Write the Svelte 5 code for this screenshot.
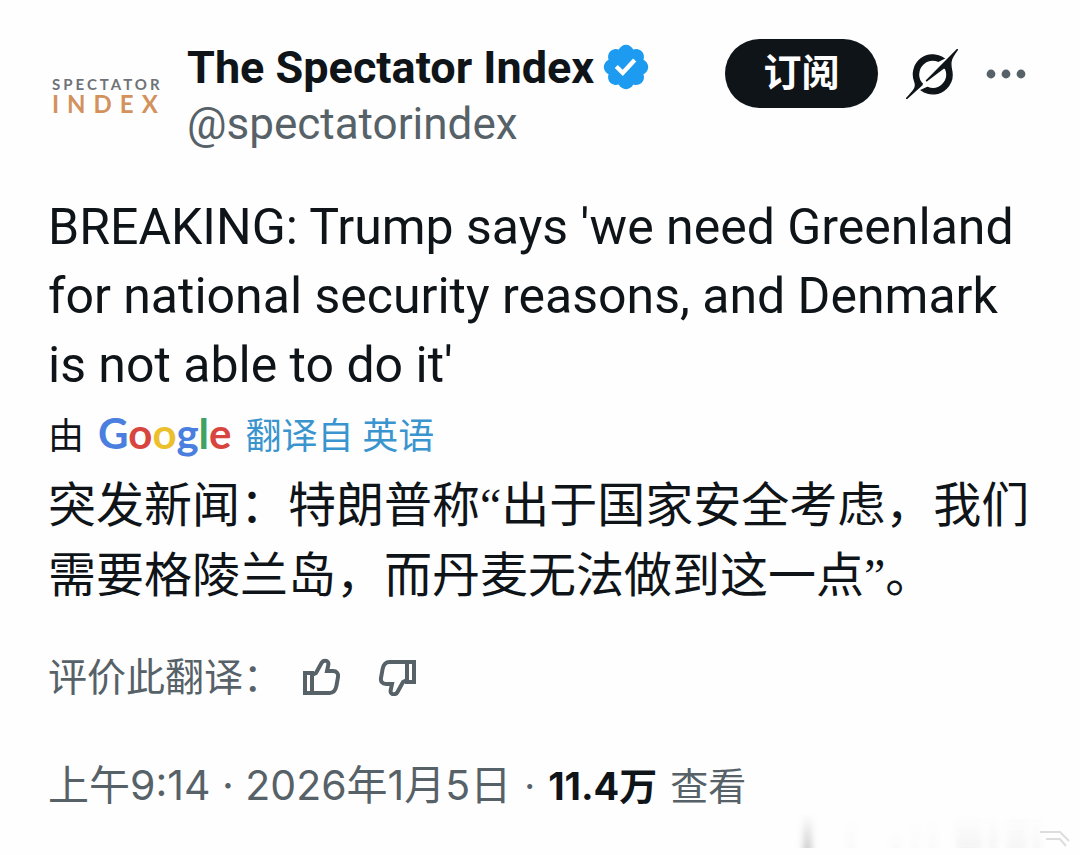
<script lang="ts">
  let rating: 'up' | 'down' | null = null;

  const google = [
    { letter: 'G', color: 'blue' },
    { letter: 'o', color: 'red' },
    { letter: 'o', color: 'yellow' },
    { letter: 'g', color: 'blue' },
    { letter: 'l', color: 'green' },
    { letter: 'e', color: 'red' }
  ];
</script>

<svelte:head>
  <title>The Spectator Index</title>
</svelte:head>

<article class="post">
  <header class="header">
    <a href="#profile" class="avatar">
      <span class="avatar__top">SPECTATOR</span>
      <span class="avatar__bottom">INDEX</span>
    </a>
    <div class="author">
      <div class="author__line">
        <a href="#profile" class="author__name">The Spectator Index</a>
        <svg class="badge" viewBox="0 0 22 22" role="img" aria-label="认证账号">
          <path
            d="M20.396 11c-.018-.646-.215-1.275-.57-1.816-.354-.54-.852-.972-1.438-1.246.223-.607.27-1.264.14-1.897-.131-.634-.437-1.218-.882-1.687-.47-.445-1.053-.75-1.687-.882-.633-.13-1.29-.083-1.897.14-.273-.587-.704-1.086-1.245-1.44S11.647 1.62 11 1.604c-.646.017-1.273.213-1.813.568s-.969.854-1.24 1.44c-.608-.223-1.267-.272-1.902-.14-.635.13-1.22.436-1.69.882-.445.47-.749 1.055-.878 1.688-.13.633-.08 1.29.144 1.896-.587.274-1.087.705-1.443 1.245-.356.54-.555 1.17-.574 1.817.02.647.218 1.276.574 1.817.356.54.856.972 1.443 1.245-.224.606-.274 1.263-.144 1.896.13.634.433 1.218.877 1.688.47.443 1.054.747 1.687.878.633.132 1.29.084 1.897-.136.274.586.705 1.084 1.246 1.439.54.354 1.17.551 1.816.569.647-.016 1.276-.213 1.817-.567s.972-.854 1.245-1.44c.604.239 1.266.296 1.903.164.636-.132 1.22-.447 1.68-.907.46-.46.776-1.044.908-1.681s.075-1.299-.165-1.903c.586-.274 1.084-.705 1.439-1.246.354-.54.551-1.17.569-1.816zM9.662 14.85l-3.429-3.428 1.293-1.302 2.072 2.072 4.4-4.794 1.347 1.246z"
          />
        </svg>
      </div>
      <a href="#profile" class="author__handle">@spectatorindex</a>
    </div>
    <div class="actions">
      <button class="subscribe">订阅</button>
      <button class="icon-button" aria-label="Grok">
        <svg class="grok" viewBox="0 0 33 32">
          <path
            d="M12.745 20.54l10.97-8.19c.539-.4 1.307-.244 1.564.38 1.349 3.288.746 7.241-1.938 9.955-2.683 2.714-6.417 3.31-9.83 1.954l-3.728 1.745c5.347 3.697 11.84 2.782 15.898-1.324 3.219-3.255 4.216-7.692 3.284-11.693l.008.009c-1.351-5.878.332-8.227 3.782-13.031L33 0l-4.54 4.59v-.014L12.743 20.544m-2.263 1.987c-3.837-3.707-3.175-9.446.1-12.755 2.42-2.449 6.388-3.448 9.852-1.979l3.72-1.737c-.67-.49-1.53-1.017-2.515-1.387-4.455-1.854-9.789-.931-13.41 2.728-3.483 3.523-4.579 8.94-2.697 13.561 1.405 3.454-.899 5.898-3.22 8.364C1.49 30.2.666 31.074 0 32l10.478-9.466"
          />
        </svg>
      </button>
      <button class="icon-button" aria-label="更多">
        <svg class="more" viewBox="0 0 40 10">
          <circle cx="5" cy="5" r="4.4" />
          <circle cx="20" cy="5" r="4.4" />
          <circle cx="35" cy="5" r="4.4" />
        </svg>
      </button>
    </div>
  </header>

  <p class="text" lang="en">
    BREAKING: Trump says 'we need Greenland for national security reasons, and Denmark is not able
    to do it'
  </p>

  <div class="source">
    <span>由</span>
    <span class="google">
      {#each google as { letter, color }}<span class={color}>{letter}</span>{/each}
    </span>
    <a href="#translation" class="source__link">翻译自 英语</a>
  </div>

  <p class="text text--translated">
    突发新闻：特朗普称“出于国家安全考虑，我们需要格陵兰岛，而丹麦无法做到这一点”。
  </p>

  <div class="rate">
    <span class="rate__label">评价此翻译：</span>
    <div class="rate__buttons">
      <button
        class="icon-button"
        aria-label="翻译得好"
        aria-pressed={rating === 'up'}
        on:click={() => (rating = 'up')}
      >
        <svg class="thumb" viewBox="0 0 38 38">
          <path d="M3 15h7v20H3z" />
          <path
            d="M10 17l4-2 5.500-10c.9-1.700 2-2.300 3.700-2.300 2.300 0 3.600 1.800 3.100 4.200L25 13h6c3.600 0 5.600 2.600 5 6l-1.600 9c-.9 4.500-3 7-7 7H10z"
          />
        </svg>
      </button>
      <button
        class="icon-button"
        aria-label="翻译得不好"
        aria-pressed={rating === 'down'}
        on:click={() => (rating = 'down')}
      >
        <svg class="thumb" viewBox="0 0 38 38">
          <g transform="rotate(180 19 19)">
            <path d="M2 14h7v20H2z" />
            <path
              d="M9 16l4-2 5.500-10c.9-1.700 2-2.300 3.700-2.300 2.300 0 3.600 1.800 3.100 4.200L24 12h6c3.600 0 5.600 2.600 5 6l-1.600 9c-.9 4.500-3 7-7 7H9z"
            />
          </g>
        </svg>
      </button>
    </div>
  </div>

  <div class="meta">
    <time datetime="2026-01-05T09:14">上午9:14 · 2026年1月5日</time>
    <span>·</span>
    <strong>11.4万</strong>
    <span>查看</span>
  </div>

  <svg class="smudge" viewBox="0 0 280 36" aria-hidden="true">
    <defs>
      <linearGradient id="fade" x1="0" y1="0" x2="0" y2="1">
        <stop offset="0" stop-color="#888" stop-opacity="0" />
        <stop offset="1" stop-color="#888" stop-opacity="1" />
      </linearGradient>
      <filter id="soft" x="-20%" y="-20%" width="140%" height="140%">
        <feGaussianBlur stdDeviation="3 0" />
      </filter>
    </defs>
    <g fill="url(#fade)" filter="url(#soft)">
      <rect x="7" y="0" width="9" height="34" opacity="0.4" />
      <rect x="52" y="6" width="6" height="28" opacity="0.05" />
      <rect x="95" y="18" width="10" height="16" opacity="0.04" />
      <rect x="117" y="6" width="5" height="28" opacity="0.04" />
      <rect x="134" y="6" width="5" height="28" opacity="0.06" />
      <rect x="160" y="2" width="26" height="32" opacity="0.08" />
      <rect x="193" y="2" width="8" height="32" opacity="0.08" />
      <rect x="211" y="2" width="20" height="32" opacity="0.07" />
      <rect x="237" y="2" width="7" height="32" opacity="0.07" />
    </g>
    <path d="M244 18h20l9 9M250 25h14l6 7" />
  </svg>
</article>

<style>
  :global(body) {
    margin: 0;
    background: #fefefe;
  }

  .post {
    padding: 36px 44px 8px 48px;
    font-family: Roboto, 'Noto Sans CJK SC', sans-serif;
    color: #0f1419;
    overflow: hidden;
  }

  a {
    color: inherit;
    text-decoration: none;
  }

  button {
    padding: 0;
    border: 0;
    background: none;
    color: inherit;
    font-family: inherit;
    cursor: pointer;
  }

  svg {
    display: block;
  }

  .header {
    display: flex;
    align-items: flex-start;
  }

  .avatar {
    display: flex;
    flex-direction: column;
    justify-content: center;
    width: 116px;
    height: 116px;
    margin-right: 23px;
    padding-left: 4px;
    box-sizing: border-box;
    font-family: Lato, sans-serif;
    font-weight: 700;
    line-height: 20px;
  }

  .avatar__top {
    font-size: 15px;
    letter-spacing: 3px;
    color: #6f7378;
  }

  .avatar__bottom {
    font-size: 24px;
    letter-spacing: 8px;
    color: #d3915c;
  }

  .author {
    flex: 1;
    min-width: 0;
  }

  .author__line {
    display: flex;
    align-items: center;
    gap: 6px;
    height: 62px;
  }

  .author__name {
    font-size: 45px;
    font-weight: 700;
    white-space: nowrap;
  }

  .badge {
    flex: none;
    width: 52px;
    height: 52px;
    fill: #1d9bf0;
  }

  .author__handle {
    display: block;
    font-size: 44px;
    line-height: 52px;
    color: #566168;
  }

  .actions {
    display: flex;
    align-items: center;
    gap: 28px;
    padding: 3px 10px 0 0;
  }

  .subscribe {
    width: 153px;
    height: 69px;
    padding-bottom: 8px;
    border-radius: 35px;
    background: #0f1419;
    color: #fff;
    font-size: 38px;
    font-weight: 700;
  }

  .grok {
    width: 52px;
    height: 50px;
    fill: #0f1419;
    stroke: #0f1419;
    stroke-width: 0.9;
  }

  .more {
    width: 40px;
    height: 10px;
    fill: #566168;
  }

  .text {
    margin: 0;
    font-size: 50px;
    line-height: 69px;
  }

  .text--translated {
    font-family: 'Liberation Serif', 'Noto Sans CJK SC', sans-serif;
    font-size: 48px;
    line-height: 70px;
  }

  .header + .text {
    margin-top: 41px;
  }

  .source {
    display: flex;
    align-items: center;
    gap: 14px;
    height: 65px;
    padding-bottom: 6px;
    font-size: 36px;
  }

  .source__link {
    color: #3a95cf;
  }

  .google {
    font-family: Lato, sans-serif;
    font-size: 42px;
    font-weight: 700;
  }

  .blue {
    color: #4a7fe0;
  }

  .red {
    color: #d8453e;
  }

  .yellow {
    color: #ecc02c;
  }

  .green {
    color: #3fa261;
  }

  .rate {
    display: flex;
    align-items: center;
    gap: 20px;
    height: 56px;
    margin-top: 38px;
    font-size: 39px;
    color: #566168;
  }

  .rate__label {
    padding-bottom: 6px;
  }

  .rate__buttons {
    display: flex;
    gap: 38px;
  }

  .thumb {
    width: 38px;
    height: 38px;
    fill: none;
    stroke: currentColor;
    stroke-width: 4;
  }

  .meta {
    display: flex;
    align-items: baseline;
    gap: 13px;
    margin-top: 52px;
    font-family: Inter, 'Noto Sans CJK SC', sans-serif;
    font-size: 38px;
    line-height: 56px;
    color: #566168;
  }

  .meta time {
    font-size: 41px;
  }

  .meta strong {
    color: #0f1419;
  }

  .smudge {
    width: 280px;
    height: 36px;
    margin: 0 -40px 0 auto;
  }

  .smudge path {
    fill: none;
    stroke: #ddd;
    stroke-width: 2;
  }
</style>
